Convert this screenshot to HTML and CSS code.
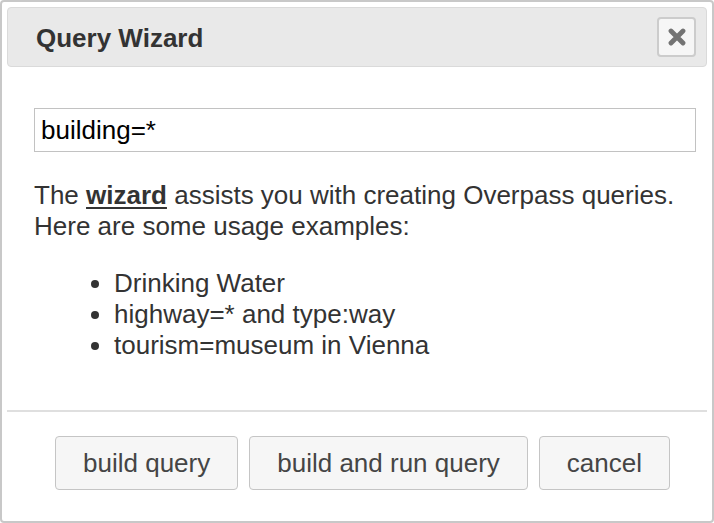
FILE: index.html
```html
<!DOCTYPE html>
<html lang="en">
<head>
<meta charset="utf-8">
<title>Query Wizard</title>
<link rel="stylesheet" href="styles.css">
</head>
<body>
<div class="dialog">
  <div class="titlebar">
    <span class="title">Query Wizard</span>
    <button class="close" type="button" aria-label="Close">
      <svg width="18" height="18" viewBox="0 0 18 18" aria-hidden="true">
        <path d="M3 3 L15 15 M15 3 L3 15" stroke="#737373" stroke-width="4.8" stroke-linecap="round" fill="none"/>
      </svg>
    </button>
  </div>
  <div class="content">
    <input class="query" type="text" value="building=*">
    <p class="intro">The <a href="#" class="link">wizard</a> assists you with creating Overpass queries. Here are some usage examples:</p>
    <ul class="examples">
      <li>Drinking Water</li>
      <li>highway=* and type:way</li>
      <li>tourism=museum in Vienna</li>
    </ul>
  </div>
  <div class="buttonpane">
    <button class="btn" type="button">build query</button>
    <button class="btn" type="button">build and run query</button>
    <button class="btn" type="button">cancel</button>
  </div>
</div>
</body>
</html>
```

FILE: styles.css
```css
html, body {
  margin: 0;
  padding: 0;
  background: #ffffff;
}

body {
  font-family: "Liberation Sans", Arial, sans-serif;
  font-size: 26px;
  color: #333333;
}

.dialog {
  box-sizing: border-box;
  width: 714px;
  height: 523px;
  border: 2px solid #c8c8c8;
  border-radius: 4px;
  padding: 5px;
  display: flex;
  flex-direction: column;
  background: #ffffff;
}

.titlebar {
  box-sizing: border-box;
  height: 60px;
  flex: none;
  border: 1px solid #dadada;
  border-radius: 4px;
  background: #e9e9e9;
  display: flex;
  align-items: center;
  justify-content: space-between;
  padding: 0 10px 0 28px;
}

.title {
  font-weight: bold;
  font-size: 26px;
  line-height: 30px;
  color: #333333;
  padding-top: 2px;
}

.close {
  box-sizing: border-box;
  width: 39px;
  height: 40px;
  margin: 0;
  padding: 0;
  border: 2px solid #cccccc;
  border-radius: 4px;
  background: #f6f6f6;
  display: flex;
  align-items: center;
  justify-content: center;
}

.content {
  padding: 41px 11px 0 27px;
}

.query {
  box-sizing: border-box;
  display: block;
  width: 100%;
  height: 44px;
  margin: 0;
  border: 1px solid #c2c2c2;
  padding: 0 6px;
  font-family: "Liberation Sans", Arial, sans-serif;
  font-size: 26px;
  color: #000000;
  background: #ffffff;
  outline: none;
}

.intro {
  margin: 28px 0 0;
  line-height: 31px;
}

.link {
  color: #333333;
  font-weight: bold;
  text-decoration: underline;
  text-decoration-thickness: 2px;
  text-underline-offset: 3px;
}

.examples {
  margin: 26px 0 0;
  padding: 0 0 0 80px;
  line-height: 31px;
}

.buttonpane {
  margin-top: auto;
  flex: none;
  border-top: 2px solid #dfdfdf;
  padding: 24px 37px 26px 0;
  display: flex;
  justify-content: flex-end;
  gap: 11px;
}

.btn {
  box-sizing: border-box;
  height: 54px;
  margin: 0;
  padding: 0 27px;
  border: 1px solid #c5c5c5;
  border-radius: 4px;
  background: #f6f6f6;
  color: #454545;
  font-family: "Liberation Sans", Arial, sans-serif;
  font-size: 26px;
  line-height: 52px;
}
```
